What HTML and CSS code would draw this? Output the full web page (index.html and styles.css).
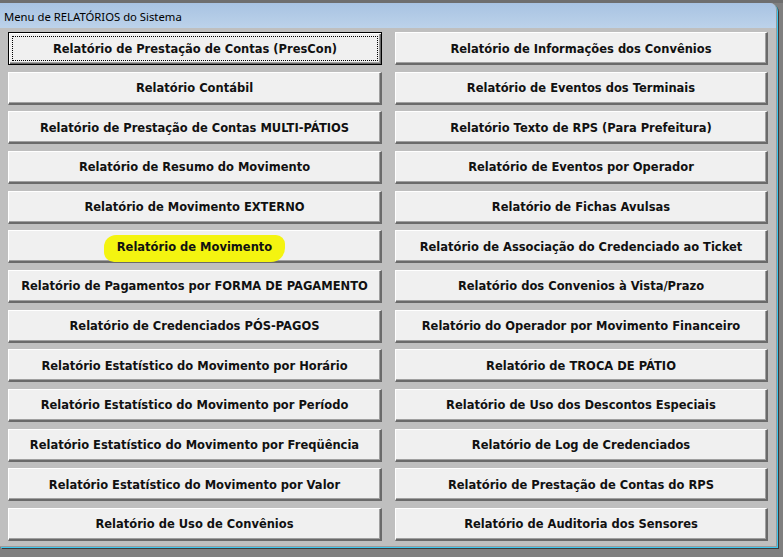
FILE: index.html
```html
<!DOCTYPE html>
<html lang="pt-BR">
<head>
<meta charset="utf-8">
<title>Menu de RELATÓRIOS do Sistema</title>
<link rel="stylesheet" href="styles.css">
</head>
<body>
<div class="desk">
  <div class="window">
    <div class="titlebar">Menu de RELATÓRIOS do Sistema</div>
    <div class="content">
      <button class="btn focused"><span class="focus">Relatório de Prestação de Contas (PresCon)</span></button>
      <button class="btn">Relatório de Informações dos Convênios</button>
      <button class="btn">Relatório Contábil</button>
      <button class="btn">Relatório de Eventos dos Terminais</button>
      <button class="btn">Relatório de Prestação de Contas MULTI-PÁTIOS</button>
      <button class="btn">Relatório Texto de RPS (Para Prefeitura)</button>
      <button class="btn">Relatório de Resumo do Movimento</button>
      <button class="btn">Relatório de Eventos por Operador</button>
      <button class="btn">Relatório de Movimento EXTERNO</button>
      <button class="btn">Relatório de Fichas Avulsas</button>
      <button class="btn"><span class="marker">Relatório de Movimento</span></button>
      <button class="btn">Relatório de Associação do Credenciado ao Ticket</button>
      <button class="btn">Relatório de Pagamentos por FORMA DE PAGAMENTO</button>
      <button class="btn">Relatório dos Convenios à Vista/Prazo</button>
      <button class="btn">Relatório de Credenciados PÓS-PAGOS</button>
      <button class="btn">Relatório do Operador por Movimento Financeiro</button>
      <button class="btn">Relatório Estatístico do Movimento por Horário</button>
      <button class="btn">Relatório de TROCA DE PÁTIO</button>
      <button class="btn">Relatório Estatístico do Movimento por Período</button>
      <button class="btn">Relatório de Uso dos Descontos Especiais</button>
      <button class="btn">Relatório Estatístico do Movimento por Freqüência</button>
      <button class="btn">Relatório de Log de Credenciados</button>
      <button class="btn">Relatório Estatístico do Movimento por Valor</button>
      <button class="btn">Relatório de Prestação de Contas do RPS</button>
      <button class="btn">Relatório de Uso de Convênios</button>
      <button class="btn">Relatório de Auditoria dos Sensores</button>
    </div>
  </div>
</div>
</body>
</html>
```

FILE: styles.css
```css
html, body {
  margin: 0;
  padding: 0;
  width: 783px;
  height: 557px;
  overflow: hidden;
  background: #7f7f7f;
}

.desk {
  width: 783px;
  height: 557px;
  padding-top: 3px;
  box-sizing: border-box;
  background: linear-gradient(#6e6e6e 0, #6e6e6e 3px, #7f7f7f 3px);
}

.window {
  width: 776px;
  height: 543px;
  background: #bfbfbf;
  border-top-right-radius: 7px;
  box-shadow: 1px 1px 0 #3cc8f0, 2px 2px 0 #3a3a3a;
  border-right: 1px solid #9a9a9a;
  border-bottom: 1px solid #9a9a9a;
  overflow: hidden;
  display: flex;
  flex-direction: column;
}

.titlebar {
  height: 25px;
  flex: none;
  background: linear-gradient(#a8c3e2, #bcd2ea);
  font-family: "Noto Sans", "DejaVu Sans", sans-serif;
  font-size: 11.3px;
  color: #000;
  line-height: 27px;
  padding-left: 4px;
  box-sizing: border-box;
}

.content {
  display: grid;
  grid-template-columns: 374px 373px;
  grid-template-rows: repeat(13, 33px);
  column-gap: 13px;
  row-gap: 6.67px;
  padding: 4px 0 0 8px;
}

.btn {
  margin: 0;
  padding: 1px 0 0;
  background: #f0f0f0;
  border-style: solid;
  border-width: 1px 2px 2px 1px;
  border-color: #ffffff #6a6a6a #6a6a6a #ffffff;
  box-shadow: inset -1px -1px 0 #a0a0a0;
  font-family: "DejaVu Sans", Verdana, sans-serif;
  font-weight: bold;
  font-size: 11.5px;
  color: #111;
  text-align: center;
  display: flex;
  align-items: center;
  justify-content: center;
  cursor: default;
}

.btn.focused {
  border: 1px solid #000;
  box-shadow: inset 1px 1px 0 #fff, inset -1px -1px 0 #6a6a6a, inset -2px -2px 0 #a0a0a0;
  padding: 3px;
}

.focus {
  flex: 1;
  align-self: stretch;
  display: flex;
  align-items: center;
  justify-content: center;
  border: 1px dotted #000;
  padding-top: 1px;
}

.marker {
  background: #f4f410;
  padding: 5px 13px 8px;
  margin-top: 3px;
  border-radius: 12px 9px 14px 10px;
}
```
